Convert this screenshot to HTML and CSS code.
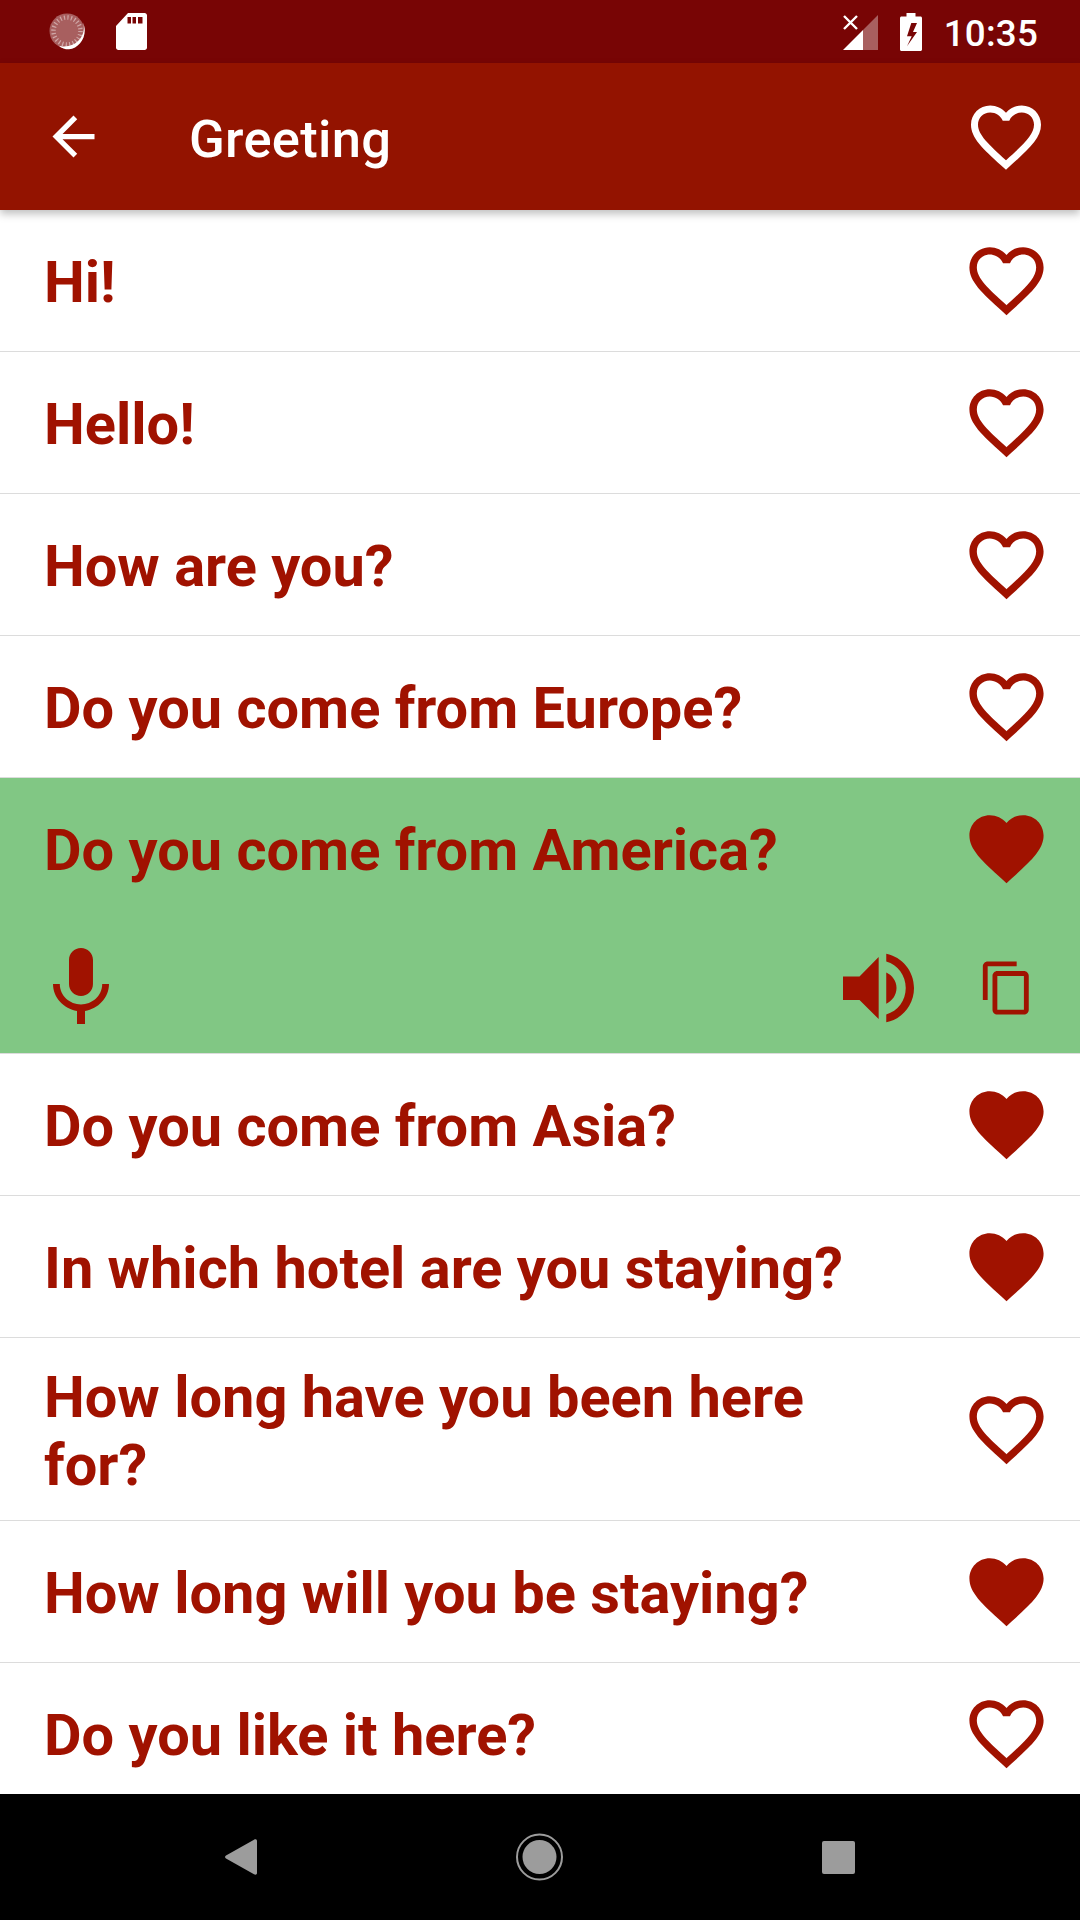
FILE: index.html
```html
<!DOCTYPE html>
<html lang="en">
<head>
    <meta charset="UTF-8">
    <meta name="viewport" content="width=device-width, initial-scale=1.0">
    <title>Greeting</title>
    <link rel="stylesheet" href="styles.css">
</head>
<body>

    <svg class="defs" width="0" height="0">
        <symbol id="heart-line" viewBox="0 0 24 24">
            <path d="M16.5 3c-1.74 0-3.41.81-4.5 2.09C10.91 3.81 9.24 3 7.5 3 4.42 3 2 5.42 2 8.5c0 3.78 3.4 6.86 8.55 11.54L12 21.35l1.45-1.32C18.6 15.36 22 12.28 22 8.5 22 5.42 19.58 3 16.5 3zm-4.4 15.55l-.1.1-.1-.1C7.14 14.24 4 11.39 4 8.5 4 6.5 5.5 5 7.5 5c1.54 0 3.04.99 3.57 2.36h1.87C13.46 5.99 14.96 5 16.5 5c2 0 3.5 1.5 3.5 3.5 0 2.89-3.14 5.74-7.9 10.05z"/>
        </symbol>
        <symbol id="heart-full" viewBox="0 0 24 24">
            <path d="M12 21.35l-1.45-1.32C5.4 15.36 2 12.28 2 8.5 2 5.42 4.42 3 7.5 3c1.74 0 3.41.81 4.5 2.09C13.09 3.81 14.76 3 16.5 3 19.58 3 22 5.42 22 8.5c0 3.78-3.4 6.86-8.55 11.54L12 21.35z"/>
        </symbol>
    </svg>

    <div class="phone">
        <div class="statusbar">
            <svg class="ic-spinner" viewBox="0 0 37 37">
                <circle cx="18" cy="18" r="17.5" fill="#fff" fill-opacity="0.36"/>
                <circle cx="18" cy="18" r="13.5" fill="none" stroke="#fff" stroke-opacity="0.45" stroke-width="4.5" stroke-dasharray="1.2 2.335"/>
                <path d="M34 9.5C37.5 20 30 33.5 15 33.5c-2 0-3.5-.3-5-.8C13 35.5 17 36.5 20 36.3 31 35.5 39.5 22 34 9.5z" fill="#fff"/>
            </svg>
            <svg class="ic-sd" viewBox="0 0 31 37">
                <path fill-rule="evenodd" d="M12 0h16.5C30 0 31 1 31 2.500v32C31 36 30 37 28.500 37h-26C1 37 0 36 0 34.500V13zM11.500 4v6.500H15V4zm5 0v6.500H20V4zm5.500 0v6.500h4.500V4z" fill="#fff"/>
            </svg>
            <div class="status-right">
                <svg class="ic-signal" viewBox="0 0 35 35">
                    <path d="M35 0v35H20V15z" fill="#fff" fill-opacity="0.36"/>
                    <path d="M20 15v20H0z" fill="#fff"/>
                    <path d="M1 1l13 13M14 1L1 14" stroke="#fff" stroke-width="2.400" fill="none"/>
                </svg>
                <svg class="ic-battery" viewBox="0 0 22 38">
                    <path fill-rule="evenodd" d="M6.500 0h9v3.500h5c.8 0 1.500.7 1.500 1.500v31.500c0 .8-.7 1.500-1.500 1.500H1.500C.7 38 0 37.300 0 36.500V5c0-.8.7-1.500 1.500-1.500h5zM11.300 10H17l-4 9h4L7 33.300l4.700-10H7z" fill="#fff"/>
                </svg>
                <span class="clock">10:35</span>
            </div>
        </div>

        <div class="toolbar">
            <svg class="ic-back" viewBox="0 0 24 24">
                <path d="M20 11H7.830l5.590-5.590L12 4l-8 8 8 8 1.410-1.410L7.830 13H20v-2z"/>
            </svg>
            <div class="toolbar-title">Greeting</div>
            <svg class="ic-toolbar-heart"><use href="#heart-line"/></svg>
        </div>

        <div class="list">
            <div class="row">
                <div class="row-main">
                    <div class="phrase">Hi!</div>
                    <svg class="ic-heart"><use href="#heart-line"/></svg>
                </div>
            </div>
            <div class="row">
                <div class="row-main">
                    <div class="phrase">Hello!</div>
                    <svg class="ic-heart"><use href="#heart-line"/></svg>
                </div>
            </div>
            <div class="row">
                <div class="row-main">
                    <div class="phrase">How are you?</div>
                    <svg class="ic-heart"><use href="#heart-line"/></svg>
                </div>
            </div>
            <div class="row">
                <div class="row-main">
                    <div class="phrase">Do you come from Europe?</div>
                    <svg class="ic-heart"><use href="#heart-line"/></svg>
                </div>
            </div>
            <div class="row selected">
                <div class="row-main">
                    <div class="phrase">Do you come from America?</div>
                    <svg class="ic-heart"><use href="#heart-full"/></svg>
                </div>
                <div class="row-actions">
                    <svg class="ic-mic" viewBox="0 0 24 24">
                        <path d="M12 14c1.660 0 2.990-1.340 2.990-3L15 5c0-1.660-1.340-3-3-3S9 3.340 9 5v6c0 1.660 1.340 3 3 3zm5.300-3c0 3-2.540 5.100-5.300 5.100S6.700 14 6.700 11H5c0 3.410 2.720 6.230 6 6.720V21h2v-3.280c3.280-.48 6-3.300 6-6.720h-1.700z"/>
                    </svg>
                    <svg class="ic-speaker" viewBox="128 548 215 208">
                        <path d="M128 617h50l58-59v188l-58-58h-50z"/>
                        <path d="M259 605c18 8 31 26 31 47s-13 39-31 48z"/>
                        <path d="M259 548c48 10 84 52 84 104s-36 94-84 104v-24c35-10 59-42 59-80s-24-70-59-80z"/>
                    </svg>
                    <svg class="ic-copy" viewBox="0 0 24 24">
                        <path d="M16 1H4c-1.100 0-2 .9-2 2v14h2V3h12V1zm3 4H8c-1.100 0-2 .9-2 2v14c0 1.100.9 2 2 2h11c1.100 0 2-.9 2-2V7c0-1.100-.9-2-2-2zm0 16H8V7h11v14z"/>
                    </svg>
                </div>
            </div>
            <div class="row">
                <div class="row-main">
                    <div class="phrase">Do you come from Asia?</div>
                    <svg class="ic-heart"><use href="#heart-full"/></svg>
                </div>
            </div>
            <div class="row">
                <div class="row-main">
                    <div class="phrase">In which hotel are you staying?</div>
                    <svg class="ic-heart"><use href="#heart-full"/></svg>
                </div>
            </div>
            <div class="row">
                <div class="row-main">
                    <div class="phrase">How long have you been here for?</div>
                    <svg class="ic-heart"><use href="#heart-line"/></svg>
                </div>
            </div>
            <div class="row">
                <div class="row-main">
                    <div class="phrase">How long will you be staying?</div>
                    <svg class="ic-heart"><use href="#heart-full"/></svg>
                </div>
            </div>
            <div class="row">
                <div class="row-main">
                    <div class="phrase">Do you like it here?</div>
                    <svg class="ic-heart"><use href="#heart-line"/></svg>
                </div>
            </div>
        </div>

        <div class="navbar">
            <svg class="nav-back" viewBox="0 0 32 36">
                <path d="M29 .8C30.500-.2 32 .5 32 2v32c0 1.500-1.500 2.200-3 1.200L1 19.500c-1.300-.8-1.300-2.200 0-3z"/>
            </svg>
            <svg class="nav-home" viewBox="0 0 47 48">
                <circle cx="23.500" cy="24" r="22.500" fill="none" stroke="#9c9c9c" stroke-width="2"/>
                <circle cx="23.500" cy="24" r="17"/>
            </svg>
            <div class="nav-square"></div>
        </div>
    </div>

</body>
</html>
```

FILE: styles.css
```css
* {
    box-sizing: border-box;
}
html, body {
    margin: 0;
    padding: 0;
}
body {
    font-family: Roboto, "Liberation Sans", sans-serif;
    background: #fff;
}
.defs {
    position: absolute;
}
svg {
    display: block;
    flex: none;
    fill: currentColor;
}
.phone {
    width: 1080px;
    height: 1920px;
    display: flex;
    flex-direction: column;
    overflow: hidden;
}

/* status bar */
.statusbar {
    height: 63px;
    flex: none;
    display: flex;
    align-items: center;
    padding: 0 42px 0 49px;
    background: #780505;
    color: #fff;
}
.ic-spinner {
    width: 37px;
    height: 37px;
    margin-right: 30px;
}
.ic-sd {
    width: 31px;
    height: 37px;
}
.status-right {
    margin-left: auto;
    display: flex;
    align-items: center;
}
.ic-signal {
    width: 35px;
    height: 35px;
    margin-top: 2px;
    margin-right: 22px;
}
.ic-battery {
    width: 22px;
    height: 38px;
    margin-right: 22px;
}
.clock {
    padding-top: 4px;
    font-size: 36.750px;
    font-weight: 500;
    letter-spacing: 0.2px;
}

/* toolbar */
.toolbar {
    height: 147px;
    flex: none;
    display: flex;
    align-items: center;
    padding: 0 32px 0 42px;
    background: #931300;
    color: #fff;
    box-shadow: 0 4px 8px rgba(0, 0, 0, 0.25);
    position: relative;
}
.ic-back {
    width: 63px;
    height: 63px;
    margin-right: 84px;
}
.toolbar-title {
    flex: 1;
    padding-top: 4px;
    font-size: 52.500px;
    font-weight: 500;
    letter-spacing: 0.3px;
}
.ic-toolbar-heart {
    width: 84px;
    height: 84px;
}

/* phrase list */
.list {
    flex: 1;
    overflow: hidden;
}
.row {
    border-bottom: 1px solid #dcdcdc;
    color: #a01200;
}
.row.selected {
    background: #81c784;
}
.row-main {
    min-height: 141px;
    display: flex;
    align-items: center;
    padding: 21px 29px 21px 44px;
}
.phrase {
    flex: 1;
    padding: 5px 50px 0 0;
    font-size: 57.750px;
    font-weight: 700;
    line-height: 67.500px;
}
.ic-heart {
    width: 89px;
    height: 89px;
}
.row-actions {
    height: 134px;
    display: flex;
    align-items: center;
    gap: 64px;
    padding: 3px 44px 0 33px;
}
.ic-mic {
    width: 96px;
    height: 96px;
    margin-right: auto;
}
.ic-speaker {
    width: 71px;
    height: 70px;
}
.ic-copy {
    width: 58px;
    height: 58px;
}

/* navigation bar */
.navbar {
    height: 126px;
    flex: none;
    display: flex;
    align-items: center;
    padding: 0 225px 0 225px;
    justify-content: space-between;
    background: #000;
    color: #9c9c9c;
}
.nav-back {
    width: 32px;
    height: 36px;
}
.nav-home {
    width: 47px;
    height: 48px;
}
.nav-square {
    width: 33px;
    height: 33px;
    border-radius: 2px;
    background: #9c9c9c;
}
```
